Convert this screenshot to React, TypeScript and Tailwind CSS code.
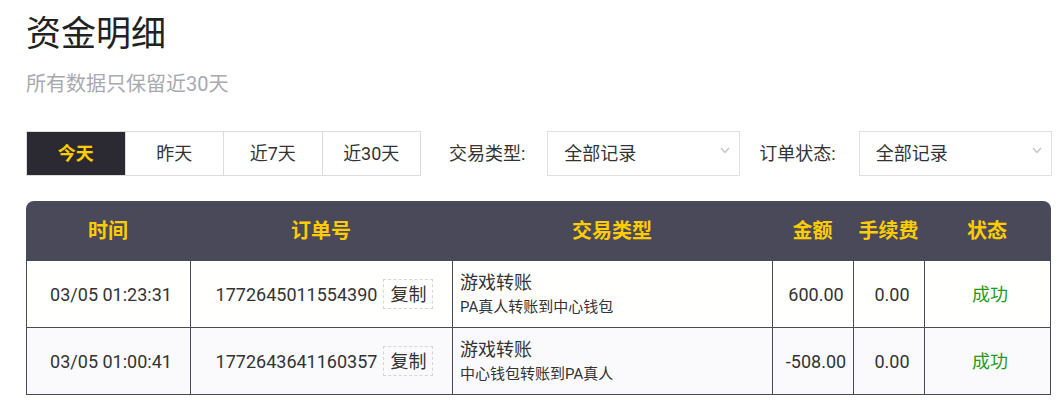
import React from "react";

const FONT = "font-['Roboto','Noto_Sans_CJK_SC',sans-serif]";

const rows = [
  {
    time: "03/05 01:23:31",
    order: "1772645011554390",
    type: "游戏转账",
    detail: "PA真人转账到中心钱包",
    amount: "600.00",
    fee: "0.00",
    status: "成功",
    bg: "bg-[#fffffe]",
  },
  {
    time: "03/05 01:00:41",
    order: "1772643641160357",
    type: "游戏转账",
    detail: "中心钱包转账到PA真人",
    amount: "-508.00",
    fee: "0.00",
    status: "成功",
    bg: "bg-[#fafafc]",
  },
];

function Chevron() {
  return (
    <svg width="10" height="7" viewBox="0 0 10 7" className="-mt-[6px] shrink-0">
      <polyline points="1,1 5,5.5 9,1" fill="none" stroke="#c4c4c4" strokeWidth="1.3" />
    </svg>
  );
}

function Select({ label }: { label: string }) {
  return (
    <div className="flex h-[45px] w-[193px] items-center justify-between border border-[#e0e0e0] bg-white pl-4 pr-[9px] text-[18px] text-[#333]">
      <span>{label}</span>
      <Chevron />
    </div>
  );
}

const GRID = "grid grid-cols-[164px_262px_320px_81px_71px_126px]";

export default function App() {
  return (
    <div className={`${FONT} min-h-[406px] bg-white pl-[26px] text-[#333]`}>
      <h1 className="pt-[17px] text-[35px] leading-[35px] font-normal text-[#222]">资金明细</h1>
      <p className="mt-[22px] text-[20px] leading-[20px] text-[#a9a9b0]">所有数据只保留近30天</p>

      <div className="mt-[37px] flex items-center">
        <div className="flex h-[45px] w-[395px] border border-[#dcdcdc] text-[18px]">
          <div className="flex flex-1 items-center justify-center bg-[#2b2a33] font-bold text-[#ffcc00]">今天</div>
          <div className="flex flex-1 items-center justify-center border-l border-[#dcdcdc]">昨天</div>
          <div className="flex flex-1 items-center justify-center border-l border-[#dcdcdc]">近7天</div>
          <div className="flex flex-1 items-center justify-center border-l border-[#dcdcdc]">近30天</div>
        </div>
        <span className="ml-[28px] mr-[22px] text-[18px]">交易类型:</span>
        <Select label="全部记录" />
        <span className="ml-[19px] mr-[23px] text-[18px]">订单状态:</span>
        <Select label="全部记录" />
      </div>

      <div className="mt-[25px] w-[1025px]">
        <div className={`${GRID} h-[60px] rounded-t-lg bg-[#4a4959] text-[20px] font-bold text-[#ffcc00]`}>
          {["时间", "订单号", "交易类型", "金额", "手续费", "状态"].map((h) => (
            <div key={h} className="flex items-center justify-center">
              {h}
            </div>
          ))}
        </div>
        <div className="border-l border-[#4a4959]">
          {rows.map((r) => (
            <div key={r.order} className={`${GRID} h-[67px] border-b border-[#4a4959] text-[18px] ${r.bg}`}>
              <div className="flex items-center justify-center border-r border-[#4a4959] pl-[5px]">{r.time}</div>
              <div className="flex items-center justify-center border-r border-[#4a4959] pl-[6px]">
                <span>{r.order}</span>
                <span className="ml-[6px] flex h-[30px] items-center border border-dashed border-[#d6d6d6] px-[6px]">
                  复制
                </span>
              </div>
              <div className="flex flex-col justify-center border-r border-[#4a4959] pl-[7px]">
                <div className="leading-[26px]">{r.type}</div>
                <div className="text-[15px] leading-[22px]">{r.detail}</div>
              </div>
              <div className="flex items-center justify-center border-r border-[#4a4959] pl-[6px]">{r.amount}</div>
              <div className="flex items-center justify-center border-r border-[#4a4959] pl-[6px]">{r.fee}</div>
              <div className="flex items-center justify-center border-r border-[#4a4959] pl-[5px] text-[#1e9a1e]">
                {r.status}
              </div>
            </div>
          ))}
        </div>
      </div>
    </div>
  );
}
